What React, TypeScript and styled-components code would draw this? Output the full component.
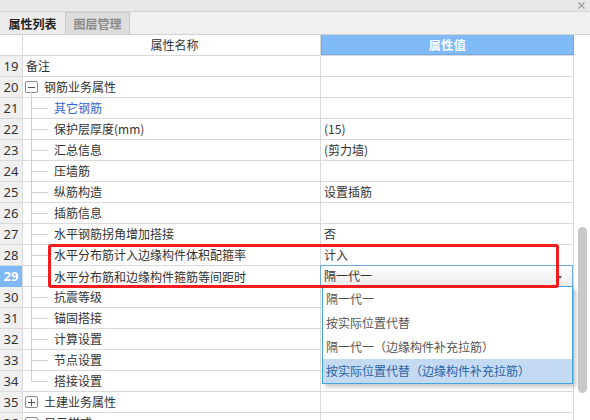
import styled, { createGlobalStyle, css } from "styled-components";

// property grid panel with an open combo in row 29

const GlobalStyle = createGlobalStyle`
    html, body {
        margin: 0;
        padding: 0;
        background: #ffffff;
    }
    body {
        font-family: "Noto Sans CJK SC", "Noto Sans", sans-serif;
        font-size: 12px;
        color: #333333;
    }
    * {
        box-sizing: border-box;
    }
`;

const Page = styled.div`
    position: relative;
    width: 590px;
    height: 420px;
    overflow: hidden;
    display: flex;
    flex-direction: column;
    background: #ffffff;
`;

const TitleBar = styled.div`
    height: 12px;
    flex: none;
    display: flex;
    align-items: center;
    justify-content: flex-end;
    padding-right: 5px;
    background: #e8e8e8;
    border-bottom: 1px solid #d6d6d6;
`;

const TabBar = styled.div`
    height: 23px;
    flex: none;
    display: flex;
    background: #f0f0f0;
    border-bottom: 1px solid #d2d2d2;
`;

const Tab = styled.div<{ $active?: boolean }>`
    width: 65px;
    display: flex;
    align-items: center;
    justify-content: center;
    font-size: 12px;
    font-weight: 700;
    ${({ $active }) =>
        $active
            ? css`
                  color: #222222;
                  background: #ececec;
              `
            : css`
                  color: #8a8a8a;
                  background: #dddddd;
                  border: 1px solid #c8c8c8;
                  border-bottom: none;
              `}
`;

const Body = styled.div`
    flex: 1;
    display: flex;
`;

const Table = styled.div`
    width: 574px;
    flex: none;
`;

const Row = styled.div`
    display: grid;
    grid-template-columns: 23px 298px 253px;
    height: 21px;
    border-bottom: 1px solid #dadada;
`;

const NumCell = styled.div<{ $current?: boolean; $blank?: boolean }>`
    border-right: 1px solid #dadada;
    font-family: "Noto Sans", sans-serif;
    font-size: 13px;
    line-height: 20px;
    text-align: center;
    color: ${({ $current }) => ($current ? "#ffffff" : "#333333")};
    font-weight: ${({ $current }) => ($current ? 700 : 400)};
    background: ${({ $current, $blank }) => ($current ? "#7fb9f5" : $blank ? "#ffffff" : "#f0f0f0")};
`;

const HeadName = styled.div`
    border-right: 1px solid #dadada;
    padding-left: 6px;
    line-height: 20px;
    text-align: center;
    color: #333333;
`;

const HeadValue = styled.div`
    border: 1px solid #6fa9e8;
    border-top: none;
    background: #80bbf7;
    color: #ffffff;
    font-weight: 700;
    line-height: 19px;
    text-align: center;
    letter-spacing: 0.5px;
`;

const NameCell = styled.div<{ $indent: number; $link?: boolean }>`
    display: flex;
    align-items: center;
    padding-left: ${({ $indent }) => $indent}px;
    border-right: 1px solid #dadada;
    line-height: 20px;
    white-space: nowrap;
    color: ${({ $link }) => ($link ? "#2d64d6" : "#333333")};
`;

const ValueCell = styled.div`
    border-right: 1px solid #dadada;
    padding-left: 3px;
    line-height: 20px;
    white-space: nowrap;
`;

// tree connector drawn beside child rows
const Branch = styled.span<{ $last?: boolean }>`
    position: relative;
    align-self: stretch;
    width: 31px;
    flex: none;

    &::before {
        content: "";
        position: absolute;
        left: 8px;
        top: 0;
        width: 1px;
        height: ${({ $last }) => ($last ? "10px" : "21px")};
        background: #cfcfcf;
    }

    &::after {
        content: "";
        position: absolute;
        left: 8px;
        top: 10px;
        width: 17px;
        height: 1px;
        background: #cfcfcf;
    }
`;

const ExpandBox = styled.span<{ $open?: boolean }>`
    position: relative;
    width: 13px;
    height: 12px;
    flex: none;
    margin-right: 6px;
    display: flex;
    align-items: center;
    justify-content: center;
    border: 1px solid #8c8c8c;
    border-radius: 2px;
    background: #ffffff;

    ${({ $open }) =>
        $open &&
        css`
            &::after {
                content: "";
                position: absolute;
                left: 5px;
                top: 100%;
                width: 1px;
                height: 5px;
                background: #cfcfcf;
            }
        `}
`;

const Combo = styled.div`
    position: relative;
    z-index: 2;
    width: 253px;
    height: 22px;
    margin: -1px 0 0 -4px;
    display: flex;
    align-items: center;
    justify-content: space-between;
    padding: 0 10px 0 3px;
    border: 1px solid #6fa9e3;
    background: linear-gradient(#ffffff, #ececec);
    color: #333333;
`;

const Caret = styled.span`
    width: 0;
    height: 0;
    border-left: 2px solid transparent;
    border-right: 2px solid transparent;
    border-top: 3px solid #555555;
    margin-top: 2px;
`;

const Dropdown = styled.ul`
    position: absolute;
    top: 20px;
    left: 1px;
    width: 251px;
    margin: 0;
    padding: 0;
    list-style: none;
    border: 1px solid #41a6e6;
    background: #ffffff;
    box-shadow: 3px 3px 4px rgba(0, 0, 0, 0.22);
`;

const Option = styled.li<{ $hover?: boolean }>`
    height: 24px;
    line-height: 24px;
    padding-left: 3px;
    white-space: nowrap;
    color: ${({ $hover }) => ($hover ? "#2a62a6" : "#555555")};
    background: ${({ $hover }) => ($hover ? "#c3daf2" : "#ffffff")};
`;

const ScrollColumn = styled.div`
    flex: 1;
    padding: 192px 0 0 4px;
`;

const Thumb = styled.div`
    width: 9px;
    height: 166px;
    border-radius: 5px;
    background: #c9c9c9;
`;

// red annotation frame drawn over rows 28 and 29
const Callout = styled.div`
    position: absolute;
    left: 48px;
    top: 244px;
    width: 511px;
    height: 44px;
    border: 3px solid #f31d1d;
    border-radius: 3px;
    z-index: 5;
    pointer-events: none;
`;

type Prop = {
    no: number;
    name: string;
    value?: string;
    kind: "plain" | "group" | "child";
    open?: boolean;
    last?: boolean;
    link?: boolean;
};

const props: Prop[] = [
    { no: 19, name: "备注", kind: "plain" },
    { no: 20, name: "钢筋业务属性", kind: "group", open: true },
    { no: 21, name: "其它钢筋", kind: "child", link: true },
    { no: 22, name: "保护层厚度(mm)", value: "(15)", kind: "child" },
    { no: 23, name: "汇总信息", value: "(剪力墙)", kind: "child" },
    { no: 24, name: "压墙筋", kind: "child" },
    { no: 25, name: "纵筋构造", value: "设置插筋", kind: "child" },
    { no: 26, name: "插筋信息", kind: "child" },
    { no: 27, name: "水平钢筋拐角增加搭接", value: "否", kind: "child" },
    { no: 28, name: "水平分布筋计入边缘构件体积配箍率", value: "计入", kind: "child" },
    { no: 29, name: "水平分布筋和边缘构件箍筋等间距时", value: "隔一代一", kind: "child" },
    { no: 30, name: "抗震等级", kind: "child" },
    { no: 31, name: "锚固搭接", kind: "child" },
    { no: 32, name: "计算设置", kind: "child" },
    { no: 33, name: "节点设置", kind: "child" },
    { no: 34, name: "搭接设置", kind: "child", last: true },
    { no: 35, name: "土建业务属性", kind: "group" },
    { no: 36, name: "显示样式", kind: "group" },
];

const options = ["隔一代一", "按实际位置代替", "隔一代一（边缘构件补充拉筋）", "按实际位置代替（边缘构件补充拉筋）"];

const EDITING = 29;

function BoxGlyph({ open }: { open?: boolean }) {
    return (
        <svg width="7" height="7" viewBox="0 0 7 7">
            <path d="M0 3.5H7" stroke="#555" strokeWidth="1" />
            {!open && <path d="M3.5 0V7" stroke="#555" strokeWidth="1" />}
        </svg>
    );
}

function NameContent({ p }: { p: Prop }) {
    if (p.kind === "group") {
        return (
            <NameCell $indent={2}>
                <ExpandBox $open={p.open}>
                    <BoxGlyph open={p.open} />
                </ExpandBox>
                {p.name}
            </NameCell>
        );
    }
    if (p.kind === "child") {
        return (
            <NameCell $indent={0} $link={p.link}>
                <Branch $last={p.last} />
                {p.name}
            </NameCell>
        );
    }
    return <NameCell $indent={3}>{p.name}</NameCell>;
}

export default function App() {
    return (
        <Page>
            <GlobalStyle />
            <TitleBar>
                <svg width="7" height="7" viewBox="0 0 7 7">
                    <path d="M0.5 0.5L6.5 6.5M6.5 0.5L0.5 6.5" stroke="#9a9a9a" strokeWidth="1.1" />
                </svg>
            </TitleBar>
            <TabBar>
                <Tab $active>属性列表</Tab>
                <Tab>图层管理</Tab>
            </TabBar>
            <Body>
                <Table>
                    <Row>
                        <NumCell $blank />
                        <HeadName>属性名称</HeadName>
                        <HeadValue>属性值</HeadValue>
                    </Row>
                    {props.map((p) => (
                        <Row key={p.no}>
                            <NumCell $current={p.no === EDITING}>{p.no}</NumCell>
                            <NameContent p={p} />
                            <ValueCell>
                                {p.no === EDITING ? (
                                    <Combo>
                                        {p.value}
                                        <Caret />
                                        <Dropdown>
                                            {options.map((o, i) => (
                                                <Option key={o} $hover={i === options.length - 1}>
                                                    {o}
                                                </Option>
                                            ))}
                                        </Dropdown>
                                    </Combo>
                                ) : (
                                    p.value
                                )}
                            </ValueCell>
                        </Row>
                    ))}
                </Table>
                <ScrollColumn>
                    <Thumb />
                </ScrollColumn>
            </Body>
            <Callout />
        </Page>
    );
}
